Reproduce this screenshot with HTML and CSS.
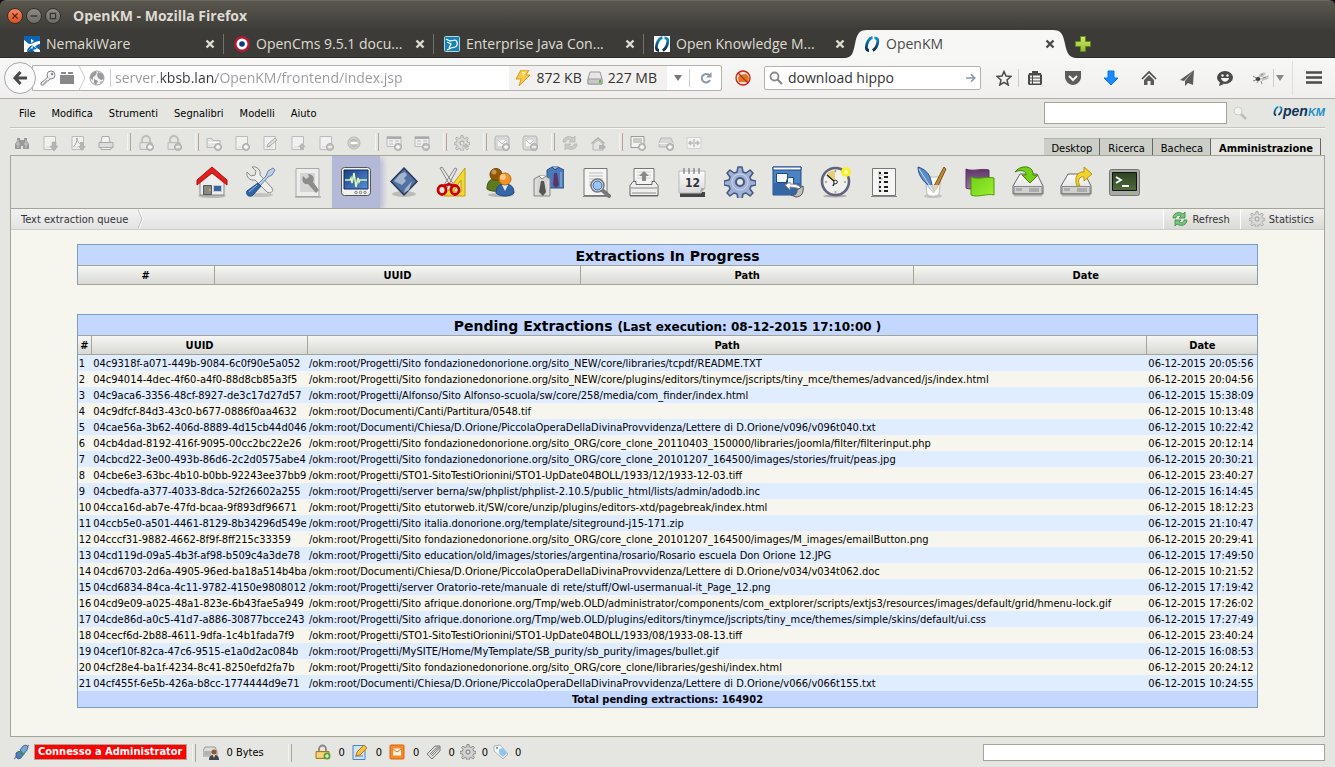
FILE: index.html
```html
<!DOCTYPE html>
<html lang="it">
<head>
    <meta charset="UTF-8">
    <meta name="viewport" content="width=device-width, initial-scale=1.0">
    <title>OpenKM</title>
    <link rel="stylesheet" href="styles.css">
</head>
<body>

<!-- shared shapes -->
<svg class="defs" aria-hidden="true">
    <defs>
        <linearGradient id="g-paper" x1="0" y1="0" x2="0" y2="1"><stop offset="0" stop-color="#fdfdfd"/><stop offset="1" stop-color="#d9d9d9"/></linearGradient>
        <linearGradient id="g-screen" x1="0" y1="0" x2="1" y2="1"><stop offset="0" stop-color="#173f86"/><stop offset="1" stop-color="#5b8fd8"/></linearGradient>
        <linearGradient id="g-green" x1="0" y1="0" x2="1" y2="1"><stop offset="0" stop-color="#6fd01a"/><stop offset="1" stop-color="#9df02e"/></linearGradient>
        <linearGradient id="g-purple" x1="0" y1="0" x2="0" y2="1"><stop offset="0" stop-color="#5c3566"/><stop offset="1" stop-color="#9a76a2"/></linearGradient>
        <linearGradient id="g-term" x1="0" y1="0" x2="0" y2="1"><stop offset="0" stop-color="#2c4420"/><stop offset="1" stop-color="#506b3c"/></linearGradient>
        <linearGradient id="g-mark" x1="0" y1="0" x2="0" y2="1"><stop offset="0" stop-color="#0e8fc9"/><stop offset="1" stop-color="#0b2a4a"/></linearGradient>
        <linearGradient id="g-plus" x1="0" y1="0" x2="0" y2="1"><stop offset="0" stop-color="#d3ea66"/><stop offset="1" stop-color="#94bb2c"/></linearGradient>
    </defs>
    <symbol id="close" viewBox="0 0 10 10"><path d="M1.5 1.5l7 7M8.5 1.500l-7 7" stroke="currentColor" stroke-width="2.400" fill="none"/></symbol>
    <symbol id="okm" viewBox="0 0 16 16">
        <path d="M8.500 1.500C5 2 2.500 7 2.300 11c0 2 .5 3.500 2.700 3.500" fill="none" stroke="url(#g-mark)" stroke-width="2.800"/>
        <path d="M10.500 1.800c2.500 0 3.600 1.500 3.300 4-.5 4-2.300 7-5 8.700" fill="none" stroke="url(#g-mark)" stroke-width="2.800"/>
    </symbol>
    <symbol id="doc" viewBox="0 0 16 16"><path d="M2 1.500h11.500v13H2z" fill="#f1f1ef" stroke="#bbb"/><path d="M4 12h7" stroke="#d6d6d6"/></symbol>
    <symbol id="badge" viewBox="0 0 16 16"><circle cx="12" cy="12" r="3.500" fill="#c4c4c2" stroke="#aaa"/></symbol>
    <symbol id="badge-add" viewBox="0 0 16 16"><use href="#badge"/><path d="M10 12h4M12 10v4" stroke="#fff" stroke-width="1.300"/></symbol>
    <symbol id="badge-del" viewBox="0 0 16 16"><use href="#badge"/><path d="M10 12h4" stroke="#fff" stroke-width="1.300"/></symbol>
    <symbol id="lock" viewBox="0 0 16 16"><path d="M4 8V5a4 4 0 0 1 8 0v3" fill="none" stroke="#bbb" stroke-width="1.800"/><path d="M2 7.500h12v7H2z" fill="#dcdcda" stroke="#bdbdbb"/><path d="M3 10h9M3 12h8" stroke="#eee"/></symbol>
    <symbol id="form" viewBox="0 0 16 16"><path d="M1 1.500h14v10H1z" fill="#eeeeec" stroke="#bbb"/><path d="M1 3h14" stroke="#aaa" stroke-width="2"/><path d="M3 6h4M3 9h4M9 6h4M9 9h3" stroke="#bbb"/></symbol>
    <symbol id="mail" viewBox="0 0 16 16"><rect x="1" y="1" width="14" height="14" rx="2" fill="#d8d8d6" stroke="#b5b5b3"/><path d="M4 5h8v6H4z" fill="#f5f5f5"/><path d="M4 5l4 4 4-4" fill="none" stroke="#bbb"/></symbol>
    <symbol id="gear" viewBox="0 0 32 32">
        <path d="M14 1h4l1 5 3 1 4-3 3 3-3 4 1 3 5 1v4l-5 1-1 3 3 4-3 3-4-3-3 1-1 5h-4l-1-5-3-1-4 3-3-3 3-4-1-3-5-1v-4l5-1 1-3-3-4 3-3 4 3 3-1z" stroke="currentColor" stroke-width="1.500" stroke-linejoin="round"/>
        <circle cx="16" cy="16" r="8" fill="none" stroke="#fff" stroke-opacity=".5"/>
        <circle cx="16" cy="16" r="4" fill="#e5e6e1" stroke="currentColor" stroke-width="2"/>
    </symbol>
    <symbol id="cycle" viewBox="0 0 16 16">
        <path d="M1 7C1 2 7 0 11 3l2-2v6H7l2-2C7 3.500 4 4.500 4 7z" stroke="currentColor" stroke-width=".8"/>
        <path d="M15 9c0 5-6 7-10 4l-2 2V9h6l-2 2c2 1.500 5 .5 5-2z" stroke="currentColor" stroke-width=".8"/>
    </symbol>
    <symbol id="drive" viewBox="0 0 32 32">
        <path d="M8 8h17l6 12v8H1v-8z" fill="url(#g-paper)" stroke="#666"/>
        <path d="M2 20.500h28v7H2z" fill="#d0d0d0" stroke="#888"/>
        <path d="M5 22v3M7 22v3M9 22v3M18 22v4M20 22v4M22 22v4M24 22v4M26 22v4" stroke="#888"/>
        <path d="M2 29.500h28" stroke="#000" stroke-opacity=".2" stroke-width="2"/>
    </symbol>
</svg>

<div class="window">
    <header class="titlebar">
        <div class="title-row">
            <button class="win-button win-close" aria-label="Chiudi"><svg viewBox="0 0 16 16"><path d="M5 5l6 6M11 5l-6 6" stroke="#4a2014" stroke-width="1.500"/></svg></button>
            <button class="win-button" aria-label="Riduci"><svg viewBox="0 0 16 16"><path d="M4 8h8" stroke="#33322e" stroke-width="1.500"/></svg></button>
            <button class="win-button" aria-label="Ingrandisci"><svg viewBox="0 0 16 16"><path d="M5 5h6v6H5z" fill="none" stroke="#33322e" stroke-width="1.300"/></svg></button>
            <span class="window-title">OpenKM - Mozilla Firefox</span>
        </div>
        <nav class="tab-row">
            <div class="tab">
                <svg class="icon16" viewBox="0 0 16 16"><path d="M0 0h16v16H0z" fill="#0a66b5"/><path d="M0 4c3 2 4 4 6 4 3 0 5-3 10-3v3c-3 0-4 2-5 3l5 3v2h-5l-4-4-4 4H0z" fill="#fff"/><path d="M3 16c0-4 3-6 6-7l-4 5zM9 10l4 3-5 1z" fill="#0a66b5"/><path d="M7 3l3 2-3 2z" fill="#fff"/></svg>
                <a class="tab-label" href="#">NemakiWare</a>
                <button class="tab-close" aria-label="Chiudi scheda"><svg><use href="#close"/></svg></button>
            </div>
            <div class="tab">
                <svg class="icon16" viewBox="0 0 16 16"><circle cx="8" cy="8" r="8" fill="#b31b34"/><circle cx="8" cy="8" r="5.500" fill="#fff"/><circle cx="8" cy="8" r="2.800" fill="#0b3a82"/></svg>
                <a class="tab-label" href="#">OpenCms 9.5.1 docu...</a>
                <button class="tab-close" aria-label="Chiudi scheda"><svg><use href="#close"/></svg></button>
            </div>
            <div class="tab">
                <svg class="icon16" viewBox="0 0 16 16"><rect x=".5" y=".5" width="15" height="15" rx="1" fill="#1583b3" stroke="#b9d4dd"/><path d="M2 3l4 2 5-1c3 1 3 6 0 7l-4 1-4 2M3 6l4 2-2 4" fill="none" stroke="#fff" stroke-width="1.200"/></svg>
                <a class="tab-label" href="#">Enterprise Java Con...</a>
                <button class="tab-close" aria-label="Chiudi scheda"><svg><use href="#close"/></svg></button>
            </div>
            <div class="tab tab-before">
                <svg class="icon16 on-white"><use href="#okm"/></svg>
                <a class="tab-label" href="#">Open Knowledge M...</a>
                <button class="tab-close" aria-label="Chiudi scheda"><svg><use href="#close"/></svg></button>
            </div>
            <div class="tab tab-active">
                <svg class="tab-shape" viewBox="0 0 240 28" preserveAspectRatio="none"><path d="M0 28C8 28 9 23 11 14 13 4 15 0 23 0H209C217 0 219 4 221 14 223 23 225 28 233 28z" fill="#f7f7f6"/></svg>
                <svg class="icon16"><use href="#okm"/></svg>
                <a class="tab-label" href="#">OpenKM</a>
                <button class="tab-close" aria-label="Chiudi scheda"><svg><use href="#close"/></svg></button>
            </div>
            <button class="new-tab" aria-label="Nuova scheda"><svg class="icon16" viewBox="0 0 16 16"><path d="M5.500.5h5v5h5v5h-5v5h-5v-5h-5v-5h5z" fill="url(#g-plus)" stroke="#5f8a1c"/></svg></button>
        </nav>
    </header>

    <div class="navbar">
        <button class="back" aria-label="Indietro"><svg viewBox="0 0 16 16"><path d="M8.500 2L3 8l5.500 6M3 8h12" fill="none" stroke="#4a4a48" stroke-width="3"/></svg></button>
        <div class="url-box">
            <svg class="icon16" viewBox="0 0 16 16"><circle cx="11" cy="5" r="4" fill="#f4f4f4" stroke="#888"/><circle cx="12" cy="4" r="1.200" fill="#888"/><path d="M8 7l-7 6v2h3v-2h2v-2h2l2-2" fill="#eee" stroke="#888"/></svg>
            <svg class="icon16" viewBox="0 0 16 16"><path d="M1 5h14v9H1z" fill="#888"/><path d="M2 2h5v2H2zM9 2h5v2H9z" fill="#888"/></svg>
            <svg class="url-chevron" viewBox="0 0 8 24"><path d="M1 0l6 12-6 12" fill="none" stroke="#c8c8c6"/></svg>
            <svg class="icon16" viewBox="0 0 16 16"><circle cx="8" cy="8" r="7" fill="#f2f2f2" stroke="#a0a0a0"/><path d="M2 4l4-3 2 2-2 3-2 1v3L1 8zM9 2l5 2 1 5-3 1-3-2-1-3zM5 9l4 2-2 4-2-2zM11 12l2-1-1 3z" fill="#9a9a9a"/></svg>
            <span class="url-line"></span>
            <input class="url-input" type="text" aria-label="Indirizzo" value="server.kbsb.lan/OpenKM/frontend/index.jsp">
            <div class="cache-info">
                <svg class="icon16" viewBox="0 0 16 16"><path d="M6 0h8l-3 5h4L4 16l2-7H1z" fill="#f7c94a" stroke="#d89c20"/><path d="M7 2h4L8 6" fill="#fff2a8"/></svg>
                <span>872 KB</span>
                <svg class="icon16" viewBox="0 0 16 16"><path d="M3 2h10l2 7v5H1V9z" fill="#e6e6e6" stroke="#999"/><path d="M1 9h14v5H1z" fill="#c9c9c9" stroke="#999"/><path d="M12 10h2v3h-2z" fill="#54c432"/></svg>
                <span>227 MB</span>
            </div>
            <button class="url-button" aria-label="Cronologia"><svg viewBox="0 0 8 8"><path d="M0 1h8L4 7z" fill="#777"/></svg></button>
            <button class="url-button reload" aria-label="Ricarica"><svg viewBox="0 0 12 12"><path d="M10 8a4.300 4.300 0 1 1-1-5" fill="none" stroke="#8a99a8" stroke-width="2"/><path d="M11.500 0v5.500H6z" fill="#8a99a8"/></svg></button>
        </div>
        <button class="nav-button" aria-label="NoScript"><svg class="icon16" viewBox="0 0 16 16"><circle cx="8" cy="8" r="7" fill="#f5d9cf"/><path d="M3 8l2-3 6-1 3 3-1 5H4z" fill="#d97a1e"/><circle cx="8" cy="8" r="7" fill="none" stroke="#cc1f16" stroke-width="1.300"/><path d="M3 3l10 10" stroke="#cc1f16" stroke-width="1.300"/></svg></button>
        <div class="search-box">
            <svg class="search-lens" viewBox="0 0 14 14"><circle cx="5.500" cy="5.500" r="4" fill="none" stroke="#888" stroke-width="1.800"/><path d="M8.500 8.500L13 13" stroke="#888" stroke-width="2.200"/></svg>
            <input class="search-input" type="text" aria-label="Cerca" value="download hippo">
            <button class="search-go" aria-label="Vai"><svg viewBox="0 0 12 12"><path d="M0 6h10M6 1.500L10.500 6 6 10.500" fill="none" stroke="#8a99a8" stroke-width="2"/></svg></button>
        </div>
        <div class="nav-icons">
            <button class="star" aria-label="Segnalibro"><svg class="icon16" viewBox="0 0 16 16"><path d="M8 1.500l2 4.500 5 .5-4 3.500 1.200 5L8 12.300 3.800 15 5 10 1 6.500 6 6z" fill="none" stroke="#4a4a48" stroke-width="1.500"/></svg></button>
            <button class="list" aria-label="Elenco segnalibri"><svg class="icon16" viewBox="0 0 16 16"><path d="M5 1h6v2h3v1l1 1v9l-1 1H2l-1-1V5l1-1V3h3z" fill="#4a4a48"/><path d="M3 6.500h2M3 9.500h2M3 12.500h2M6 6.500h7M6 9.500h7M6 12.500h7" stroke="#f4f4f2" stroke-width="1.800"/></svg></button>
            <button aria-label="Pocket"><svg class="icon16" viewBox="0 0 16 16"><path d="M0 1h16v6c0 4-4 8-8 8S0 11 0 7z" fill="#5c5c5a"/><path d="M4 6l4 4 4-4" fill="none" stroke="#f4f4f2" stroke-width="2"/></svg></button>
            <button aria-label="Scaricamenti"><svg class="icon16" viewBox="0 0 16 16"><path d="M5 1h6v7h4l-7 7-7-7h4z" fill="#1a8cff" stroke="#0b74de"/></svg></button>
            <button aria-label="Pagina iniziale"><svg class="icon16" viewBox="0 0 16 16"><path d="M1 9l7-7 7 7" fill="none" stroke="#4a4a48" stroke-width="1.600"/><path d="M3 10l5-5 5 5v5H9.500v-4h-3v4H3z" fill="#5c5c5a"/></svg></button>
            <button aria-label="Condividi"><svg class="icon16" viewBox="0 0 16 16"><path d="M15 0L1 10l4 1zM15 0L6 11v5l3-3 5 2z" fill="#5c5c5a"/></svg></button>
            <button aria-label="Hello"><svg class="icon16" viewBox="0 0 16 16"><ellipse cx="8" cy="7.500" rx="8" ry="6.500" fill="#4a4a48"/><path d="M3 12l-1 4 5-2z" fill="#4a4a48"/><path d="M4 8h8c-1 5-7 5-8 0z" fill="#f4f4f2"/><circle cx="5.500" cy="5.500" r="1.200" fill="#f4f4f2"/><circle cx="10.500" cy="5.500" r="1.200" fill="#f4f4f2"/></svg></button>
            <button class="fly" aria-label="Firebug"><svg class="icon16" viewBox="0 0 16 16"><path d="M5 7c2-5 6-5 8-4l-3 4zM8 8l8-3-1 4-6 2z" fill="#c4c4c2"/><ellipse cx="5" cy="9" rx="2.500" ry="2" fill="#444"/><path d="M0 6l3 2M0 11l3-1M4 13l1-2M9 14l-1-3M8 5l2-1M10 8l3-1" stroke="#888"/></svg></button>
            <button class="fly-arrow" aria-label="Opzioni Firebug"><svg viewBox="0 0 8 8"><path d="M0 1h8L4 7z" fill="#888"/></svg></button>
            <button class="burger" aria-label="Menu"><svg class="icon16" viewBox="0 0 16 16"><path d="M0 2.500h16M0 7.500h16M0 12.500h16" stroke="#4a4a48" stroke-width="2.500"/></svg></button>
        </div>
    </div>
</div>

<div class="app">
    <div class="menu-bar">
        <nav class="menu">
            <button>File</button>
            <button>Modifica</button>
            <button>Strumenti</button>
            <button>Segnalibri</button>
            <button>Modelli</button>
            <button>Aiuto</button>
        </nav>
        <input class="quick-search" type="text" aria-label="Ricerca veloce">
        <button class="quick-go" aria-label="Cerca"><svg viewBox="0 0 14 14"><circle cx="5" cy="5" r="4" fill="#f2f2f0" stroke="#ccc"/><path d="M8 8l5 5" stroke="#bdbdbb" stroke-width="2.500"/></svg></button>
        <a class="logo" href="#"><svg viewBox="0 0 16 16"><use href="#okm"/></svg><span>pen<b>KM</b></span></a>
    </div>

    <div class="tool-row">
        <div class="tools">
            <button aria-label="Trova"><svg viewBox="0 0 16 16"><path d="M3 3h3v2h4V3h3v3l2 3v5H9v-3H7v3H1V9l2-3z" fill="#999"/><path d="M2 9h4M10 9h4M4 5v8M12 5v8" stroke="#ccc"/></svg></button>
            <button aria-label="Scarica"><svg viewBox="0 0 16 16"><use href="#doc"/><path d="M10 7h4v4h2l-4 5-4-5h2z" fill="#b4b4b2" stroke="#a5a5a3" stroke-width=".5"/></svg></button>
            <button aria-label="Scarica PDF"><svg viewBox="0 0 16 16"><use href="#doc"/><path d="M3 12c3-2 4-6 4-9 0 3 2 6 5 7" fill="none" stroke="#aaa"/><path d="M10 7h4v4h2l-4 5-4-5h2z" fill="#b4b4b2"/></svg></button>
            <button aria-label="Stampa"><svg viewBox="0 0 16 16"><path d="M4 1.500h7l1 6H3z" fill="#f3f3f1" stroke="#aaa"/><path d="M1 7.500h14v5H1z" fill="#ddd" stroke="#a8a8a6"/><path d="M3 12.500h10v2H3z" fill="#f3f3f1" stroke="#aaa"/></svg></button>
            <i class="sep"></i>
            <button aria-label="Blocca"><svg><use href="#lock"/><use href="#badge-add"/></svg></button>
            <button aria-label="Sblocca"><svg><use href="#lock"/><use href="#badge-del"/></svg></button>
            <i class="sep"></i>
            <button aria-label="Nuova cartella"><svg viewBox="0 0 16 16"><path d="M1 3.500h5l1 2h7v7H1z" fill="#e4e4e2" stroke="#b9b9b7"/><path d="M2 7.500h11" stroke="#fff"/><use href="#badge-add"/></svg></button>
            <button aria-label="Nuovo documento"><svg><use href="#doc"/><use href="#badge-add"/></svg></button>
            <button aria-label="Modifica documento"><svg viewBox="0 0 16 16"><use href="#doc"/><path d="M5 12l1-3 7-6 2 2-7 6z" fill="#ddd" stroke="#aaa"/></svg></button>
            <button aria-label="Check-in"><svg viewBox="0 0 16 16"><use href="#doc"/><path d="M12 8l4 4h-2v3h-4v-3H8z" fill="#b8b8b6"/></svg></button>
            <button aria-label="Annulla modifica"><svg><use href="#doc"/><use href="#badge-del"/></svg></button>
            <button aria-label="Elimina"><svg viewBox="0 0 16 16"><circle cx="8" cy="8" r="6" fill="#bcbcba" stroke="#b5b5b3"/><circle cx="8" cy="8" r="5" fill="none" stroke="#d8d8d6"/><path d="M4.500 8h7" stroke="#fff" stroke-width="2.500"/></svg></button>
            <i class="sep"></i>
            <button aria-label="Aggiungi gruppo"><svg><use href="#form"/><use href="#badge-add"/></svg></button>
            <button aria-label="Rimuovi gruppo"><svg><use href="#form"/><use href="#badge-del"/></svg></button>
            <i class="sep"></i>
            <button aria-label="Avvia workflow"><svg class="gray-gear" viewBox="0 0 16 16"><use href="#gear"/><path d="M8 9h3V7l5 4-5 4v-2H8z" fill="#bcbcba" stroke="#eee" stroke-width=".6"/></svg></button>
            <i class="sep"></i>
            <button aria-label="Aggiungi sottoscrizione"><svg><use href="#mail"/><use href="#badge-add"/></svg></button>
            <button aria-label="Rimuovi sottoscrizione"><svg><use href="#mail"/><use href="#badge-del"/></svg></button>
            <i class="sep"></i>
            <button aria-label="Aggiorna"><svg class="gray-cycle"><use href="#cycle"/></svg></button>
            <button aria-label="Home"><svg viewBox="0 0 16 16"><path d="M1 8l7-6 7 6-1 1-6-5-6 5z" fill="#b0b0ae"/><path d="M3 9l5-4 5 4v6H3z" fill="#e3e3e1" stroke="#b5b5b3"/><path d="M9 10h3V8l4 4-4 4v-2H9z" fill="#b5b5b3"/></svg></button>
            <i class="sep"></i>
            <button aria-label="Scansione"><svg viewBox="0 0 16 16"><path d="M1 1.500h13v11H1z" fill="#f2f2f0" stroke="#999"/><path d="M3 3h9v5H3z" fill="#c9c9c7"/><use href="#badge-add"/></svg></button>
            <button aria-label="Carica"><svg viewBox="0 0 16 16"><path d="M3 3h10l2 5v4H1V8z" fill="#d8d8d6" stroke="#b8b8b6"/><path d="M1 8.500h14" stroke="#f3f3f1"/><use href="#badge-add"/></svg></button>
            <button aria-label="Dividi"><svg viewBox="0 0 16 16"><path d="M1 2.500h14v11H1z" fill="#f3f3f1" stroke="#d0d0ce"/><path d="M7 8H3M9 8h4M5 6L3 8l2 2M11 6l2 2-2 2M8 4v8" fill="none" stroke="#b5b5b3" stroke-width="1.300"/></svg></button>
        </div>
        <nav class="views">
            <button>Desktop</button>
            <button>Ricerca</button>
            <button>Bacheca</button>
            <button class="current">Amministrazione</button>
        </nav>
    </div>

    <main class="panel">
        <nav class="admin-icons">
            <button aria-label="Home"><svg viewBox="0 0 32 32"><ellipse cx="16" cy="30" rx="14" ry="2" fill="#000" fill-opacity=".2"/><path d="M4 15L16 5l12 10v14H4z" fill="#eeeeec" stroke="#888"/><path d="M7.500 19.500h8v9h-8z" fill="#888a85" stroke="#555"/><path d="M17.500 19.500h8v6h-8z" fill="#3465a4" stroke="#ccc"/><circle cx="14" cy="24" r=".8" fill="#fce94f"/><path d="M16 1L1 14v5L16 7l15 12v-5z" fill="#e22020" stroke="#b50b0b" stroke-linejoin="round"/></svg></button>
            <button aria-label="Configurazione"><svg viewBox="0 0 32 32"><ellipse cx="16" cy="29" rx="13" ry="2" fill="#000" fill-opacity=".15"/><path d="M3 6l4 4 4-1 1-4-4-4c5-1 9 3 8 8l12 13c2 4-2 6-5 4L11 14C6 15 2 11 3 6z" fill="#eeeeec" stroke="#888a85"/><path d="M24 5l5-3 2 2-3 5-4 2-8 9-2-2 8-8z" fill="#b9cde4" stroke="#6a86a8"/><path d="M14 17l3 3-8 9c-3 3-8 0-6-4z" fill="#3465a4" stroke="#204a87"/><path d="M5 26l8-7" stroke="#9cc0ea"/></svg></button>
            <button aria-label="Tipi MIME"><svg viewBox="0 0 32 32"><path d="M4 2.500h23v28H4z" fill="#ededeb" stroke="#aaa"/><path d="M8 7h15v19H8z" fill="#d5d5d3"/><path d="M11 10l3 3 3-2-1-3c5 0 7 4 5 8l6 8-3 3-8-9c-4 1-7-3-5-8z" fill="#8c8c8a"/><path d="M3 31h26" stroke="#999"/></svg></button>
            <button class="selected" aria-label="Statistiche"><svg viewBox="0 0 32 32"><rect x="1.500" y="1.500" width="29" height="28" rx="3" fill="#f2f2ef" stroke="#555"/><path d="M4 4h24v19H4z" fill="url(#g-screen)" stroke="#112c5c"/><path d="M5 14h5l1-2 1 5 2-10 2 14 2-9 1 4 1-2h7" fill="none" stroke="#d9f7b0" stroke-width="1.600"/><circle cx="16" cy="26.500" r="1.300" fill="#ddd" stroke="#888"/><circle cx="20.500" cy="26.500" r="1.300" fill="#ddd" stroke="#888"/><circle cx="25" cy="26.500" r="1.300" fill="#ddd" stroke="#888"/></svg></button>
            <button aria-label="Navigatore"><svg viewBox="0 0 32 32"><ellipse cx="16" cy="28" rx="12" ry="3" fill="#000" fill-opacity=".18"/><path d="M16 2l13 13.500L16 29 3 15.500z" fill="#52719e" stroke="#26395a" stroke-width="1.500"/><path d="M12 8l5-2 2 3-3 3 2 3-4 4-4-2-4-2zM17 23l7-8-3 9-5 3z" fill="#b7c6da" fill-opacity=".8"/></svg></button>
            <button aria-label="Utilità"><svg viewBox="0 0 32 32"><path d="M29 2v28H8z" fill="#f4d733" stroke="#c4a000"/><path d="M25 14v12h-8z" fill="#e5e6e1" stroke="#c4a000"/><path d="M4 2l11 19 3-2L6 1zM19 2L8 19l3 3L21 3z" fill="#e6e6e4" stroke="#888"/><ellipse cx="6" cy="24" rx="4" ry="4.500" fill="none" stroke="#cc0000" stroke-width="2.800"/><ellipse cx="19" cy="24" rx="4" ry="4.500" fill="none" stroke="#cc0000" stroke-width="2.800"/><path d="M8 20l5-2 5 2" fill="none" stroke="#cc0000" stroke-width="2.500"/></svg></button>
            <button aria-label="Utenti"><svg viewBox="0 0 32 32"><ellipse cx="17" cy="29" rx="13" ry="2" fill="#000" fill-opacity=".2"/><path d="M3 23c0-6 2-10 8-10s9 4 9 10c-4 3-13 3-17 0z" fill="#5e7a20" stroke="#3c5210"/><circle cx="12" cy="8.500" r="6" fill="#8f5902" stroke="#6b4201"/><circle cx="10" cy="6" r="2.500" fill="#c89352"/><path d="M12 27c0-6 3-9 9-9s9 3 9 9c-4 4-14 4-18 0z" fill="#3465a4" stroke="#204a87"/><path d="M18 19l3 6 3-6z" fill="#dce8f5"/><circle cx="21" cy="13" r="6" fill="#f0932b" stroke="#c46a0a"/><circle cx="19" cy="11" r="3" fill="#ffc684"/></svg></button>
            <button aria-label="Profili"><svg viewBox="0 0 32 32"><path d="M15 4l5-3h6l6 3v18H15z" fill="#4a7ab8" stroke="#2b5388"/><path d="M20 1l3 3 4-3" fill="#8bb0df" stroke="#204a87"/><path d="M22 7h3l2 12-3 3-3-3z" fill="#5c3566"/><path d="M2 13l5-3h6l5 3v17H2z" fill="#d5d5d3" stroke="#888"/><path d="M7 10l3 3 4-3" fill="#fff" stroke="#888"/><path d="M9 15h3l2 11-3 4-4-4z" fill="#555753"/><path d="M4 15v14M16 15v14M29 6v15" stroke="#fff" stroke-opacity=".5"/></svg></button>
            <button aria-label="Log attività"><svg viewBox="0 0 32 32"><path d="M4 2.500h23v27H4z" fill="#f5f5f3" stroke="#777"/><path d="M9 7h14M9 10h14M9 13h14M9 16h8M9 19h5" stroke="#bbb"/><path d="M3 30.500h26" stroke="#888"/><path d="M22 24l7 6" stroke="#777" stroke-width="4" stroke-linecap="round"/><circle cx="17.500" cy="19.500" r="6.500" fill="#e4eefa" stroke="#777" stroke-width="1.500"/><circle cx="17.500" cy="19.500" r="4.500" fill="#9fc2ee" stroke="#3465a4"/></svg></button>
            <button aria-label="Stampa"><svg viewBox="0 0 32 32"><path d="M6 2.500h20v16H6z" fill="#f6f6f4" stroke="#777"/><path d="M9 6h14M9 9h14M9 12h14" stroke="#ccc"/><path d="M16 5l5 5h-3v5h-4v-5h-3z" fill="#888a85"/><path d="M5 15.500h3v3h16v-3h3l3 4v10H2v-10z" fill="#efefed" stroke="#666"/><path d="M3 22h26M4 27h24" stroke="#888"/><path d="M2 30.500h28" stroke="#aaa"/></svg></button>
            <button aria-label="Calendario"><svg viewBox="0 0 32 32"><path d="M4 26h25v5H4z" fill="#444"/><path d="M3 5h26v17l-4 5H3z" fill="url(#g-paper)" stroke="#bbb"/><path d="M8 2v6M13 2v6M18 2v6M23 2v6" stroke="#666"/><path d="M24 27l1-5h4z" fill="#aaa"/><text x="9" y="21" class="cal-day">12</text></svg></button>
            <button aria-label="Impostazioni"><svg class="blue-gear"><use href="#gear"/></svg></button>
            <button aria-label="Report"><svg viewBox="0 0 32 32"><path d="M1 1h28v28H1z" fill="#4a82c4" stroke="#204a87"/><path d="M1 1h28v3H1z" fill="#fff" stroke="#204a87"/><path d="M2 17h26v11H2z" fill="#3465a4"/><path d="M4.500 7.500h11v9h-11zM16.500 11.500h5v8h-7v-5z" fill="#f4f7fb" stroke="#204a87"/><path d="M13 19l5-3v2c6 0 9 1 12 5-1 0-4 0-5-1l-7-1v3z" fill="#fff" stroke="#888"/><path d="M19 29c5 1 6-2 6-5l6-4c1 6-1 11-7 11z" fill="#bfbfbd" stroke="#555"/></svg></button>
            <button aria-label="Attività pianificate"><svg viewBox="0 0 32 32"><ellipse cx="15" cy="30" rx="12" ry="1.500" fill="#000" fill-opacity=".25"/><circle cx="15.500" cy="15.500" r="13.500" fill="#f0f0ee" stroke="#62627e" stroke-width="2.600"/><path d="M15 16L7 9c1-3 5-5 8-4z" fill="#e8cf74"/><path d="M15 16L7 9M15 16l-2 4" stroke="#222" stroke-width="1.500"/><circle cx="15.500" cy="16" r="1.800" fill="#fff" stroke="#222"/><circle cx="15.500" cy="5" r="1" fill="#999"/><circle cx="25" cy="16" r="1" fill="#999"/><circle cx="15.500" cy="26" r="1" fill="#999"/><circle cx="6" cy="16" r="1" fill="#999"/><circle cx="26" cy="6" r="5" fill="#f8ee2c"/><circle cx="26" cy="6" r="2" fill="#fffcae"/></svg></button>
            <button aria-label="Thesaurus"><svg viewBox="0 0 32 32"><path d="M4.500 2.500h23v27h-23z" fill="#f6f6f4" stroke="#777"/><path d="M3 30.500h26" stroke="#888"/><path d="M11 5v4h4M11 9v4h4M11 17v8h4" fill="none" stroke="#bbb"/><path d="M11 7h2M16 7h4M11 12h2M16 11h4M11 16h2M16 16h4M11 21h2M16 21h4M11 25h2M16 25h4" stroke="#222" stroke-width="2"/></svg></button>
            <button aria-label="Stili"><svg viewBox="0 0 32 32"><ellipse cx="17" cy="30" rx="9" ry="2" fill="#000" fill-opacity=".15"/><path d="M9 11h16l-2 17c-2 3-10 3-12 0z" fill="#fafafa" stroke="#bbb"/><path d="M2 1c7 2 12 7 13 14l3 11c-4-2-6-5-7-8C6 14 2 8 2 1z" fill="#5b8cca" stroke="#2b5388"/><path d="M3 3l14 22" stroke="#c6dbf2"/><path d="M28 1l2 2-9 19-4 5 1-7z" fill="#c08a34" stroke="#7a5212"/><path d="M11 19h12l-1 9H12z" fill="#fff" fill-opacity=".65"/></svg></button>
            <button aria-label="Lingua"><svg viewBox="0 0 32 32"><path d="M2 3c6 3 16-1 23 1v18c-7-2-17 3-23 0z" fill="url(#g-purple)" stroke="#5c3566"/><path d="M7 11c6 3 17-1 23 1v17c-6-2-17 3-23 0z" fill="url(#g-green)" stroke="#4e9a06"/></svg></button>
            <button aria-label="Importa"><svg><use href="#drive"/><path d="M3 6C8-1 20-1 21 7v2h5l-8 8-8-8h4c1-4-6-6-11-3z" fill="#73d216" stroke="#3e8205"/></svg></button>
            <button aria-label="Esporta"><svg><use href="#drive"/><path d="M17 20c-3-8 0-15 7-14V1l8 7-8 7v-4c-5-1-7 4-4 9z" fill="#f0d330" stroke="#b89500"/></svg></button>
            <button aria-label="Scripting"><svg viewBox="0 0 32 32"><rect x="1.500" y="3.500" width="30" height="26" rx="2" fill="#a8aaa5" stroke="#777"/><path d="M4.500 6.500h24v18h-24z" fill="url(#g-term)" stroke="#111"/><path d="M8 11l5 3-5 3M14 20h7" fill="none" stroke="#fff" stroke-width="1.800"/><path d="M22 27h2" stroke="#7ad42a" stroke-width="1.500"/></svg></button>
        </nav>

        <div class="crumb-bar">
            <span class="crumb">Text extraction queue</span>
            <svg class="crumb-end" viewBox="0 0 6 20"><path d="M0 0l4 10-4 10" fill="none" stroke="#b8b8b6"/><path d="M1 0l4 10-4 10" fill="none" stroke="#fff"/></svg>
            <span class="spacer"></span>
            <button><svg class="green-cycle"><use href="#cycle"/></svg>Refresh</button>
            <button><svg class="gray-gear"><use href="#gear"/></svg>Statistics</button>
        </div>

        <table class="results progress-table">
            <thead>
                <tr class="caption"><th colspan="4">Extractions In Progress</th></tr>
                <tr class="heads"><th class="p-num">#</th><th class="p-uuid">UUID</th><th class="p-path">Path</th><th class="p-date">Date</th></tr>
            </thead>
        </table>

        <table class="results">
            <thead>
                <tr class="caption"><th colspan="4">Pending Extractions <span>(Last execution: 08-12-2015 17:10:00 )</span></th></tr>
                <tr class="heads"><th class="num">#</th><th class="uuid">UUID</th><th>Path</th><th class="date">Date</th></tr>
            </thead>
            <tbody>
                <tr><td>1</td><td>04c9318f-a071-449b-9084-6c0f90e5a052</td><td>/okm:root/Progetti/Sito fondazionedonorione.org/sito_NEW/core/libraries/tcpdf/README.TXT</td><td>06-12-2015 20:05:56</td></tr>
                <tr><td>2</td><td>04c94014-4dec-4f60-a4f0-88d8cb85a3f5</td><td>/okm:root/Progetti/Sito fondazionedonorione.org/sito_NEW/core/plugins/editors/tinymce/jscripts/tiny_mce/themes/advanced/js/index.html</td><td>06-12-2015 20:04:56</td></tr>
                <tr><td>3</td><td>04c9aca6-3356-48cf-8927-de3c17d27d57</td><td>/okm:root/Progetti/Alfonso/Sito Alfonso-scuola/sw/core/258/media/com_finder/index.html</td><td>06-12-2015 15:38:09</td></tr>
                <tr><td>4</td><td>04c9dfcf-84d3-43c0-b677-0886f0aa4632</td><td>/okm:root/Documenti/Canti/Partitura/0548.tif</td><td>06-12-2015 10:13:48</td></tr>
                <tr><td>5</td><td>04cae56a-3b62-406d-8889-4d15cb44d046</td><td>/okm:root/Documenti/Chiesa/D.Orione/PiccolaOperaDellaDivinaProvvidenza/Lettere di D.Orione/v096/v096t040.txt</td><td>06-12-2015 10:22:42</td></tr>
                <tr><td>6</td><td>04cb4dad-8192-416f-9095-00cc2bc22e26</td><td>/okm:root/Progetti/Sito fondazionedonorione.org/sito_ORG/core_clone_20110403_150000/libraries/joomla/filter/filterinput.php</td><td>06-12-2015 20:12:14</td></tr>
                <tr><td>7</td><td>04cbcd22-3e00-493b-86d6-2c2d0575abe4</td><td>/okm:root/Progetti/Sito fondazionedonorione.org/sito_ORG/core_clone_20101207_164500/images/stories/fruit/peas.jpg</td><td>06-12-2015 20:30:21</td></tr>
                <tr><td>8</td><td>04cbe6e3-63bc-4b10-b0bb-92243ee37bb9</td><td>/okm:root/Progetti/STO1-SitoTestiOrionini/STO1-UpDate04BOLL/1933/12/1933-12-03.tiff</td><td>06-12-2015 23:40:27</td></tr>
                <tr><td>9</td><td>04cbedfa-a377-4033-8dca-52f26602a255</td><td>/okm:root/Progetti/server berna/sw/phplist/phplist-2.10.5/public_html/lists/admin/adodb.inc</td><td>06-12-2015 16:14:45</td></tr>
                <tr><td>10</td><td>04cca16d-ab7e-47fd-bcaa-9f893df96671</td><td>/okm:root/Progetti/Sito etutorweb.it/SW/core/unzip/plugins/editors-xtd/pagebreak/index.html</td><td>06-12-2015 18:12:23</td></tr>
                <tr><td>11</td><td>04ccb5e0-a501-4461-8129-8b34296d549e</td><td>/okm:root/Progetti/Sito italia.donorione.org/template/siteground-j15-171.zip</td><td>06-12-2015 21:10:47</td></tr>
                <tr><td>12</td><td>04cccf31-9882-4662-8f9f-8ff215c33359</td><td>/okm:root/Progetti/Sito fondazionedonorione.org/sito_ORG/core_clone_20101207_164500/images/M_images/emailButton.png</td><td>06-12-2015 20:29:41</td></tr>
                <tr><td>13</td><td>04cd119d-09a5-4b3f-af98-b509c4a3de78</td><td>/okm:root/Progetti/Sito education/old/images/stories/argentina/rosario/Rosario escuela Don Orione 12.JPG</td><td>06-12-2015 17:49:50</td></tr>
                <tr><td>14</td><td>04cd6703-2d6a-4905-96ed-ba18a514b4ba</td><td>/okm:root/Documenti/Chiesa/D.Orione/PiccolaOperaDellaDivinaProvvidenza/Lettere di D.Orione/v034/v034t062.doc</td><td>06-12-2015 10:21:52</td></tr>
                <tr><td>15</td><td>04cd6834-84ca-4c11-9782-4150e9808012</td><td>/okm:root/Progetti/server Oratorio-rete/manuale di rete/stuff/Owl-usermanual-it_Page_12.png</td><td>06-12-2015 17:19:42</td></tr>
                <tr><td>16</td><td>04cd9e09-a025-48a1-823e-6b43fae5a949</td><td>/okm:root/Progetti/Sito afrique.donorione.org/Tmp/web.OLD/administrator/components/com_extplorer/scripts/extjs3/resources/images/default/grid/hmenu-lock.gif</td><td>06-12-2015 17:26:02</td></tr>
                <tr><td>17</td><td>04cde86d-a0c5-41d7-a886-30877bcce243</td><td>/okm:root/Progetti/Sito afrique.donorione.org/Tmp/web.OLD/plugins/editors/tinymce/jscripts/tiny_mce/themes/simple/skins/default/ui.css</td><td>06-12-2015 17:27:49</td></tr>
                <tr><td>18</td><td>04cecf6d-2b88-4611-9dfa-1c4b1fada7f9</td><td>/okm:root/Progetti/STO1-SitoTestiOrionini/STO1-UpDate04BOLL/1933/08/1933-08-13.tiff</td><td>06-12-2015 23:40:24</td></tr>
                <tr><td>19</td><td>04cef10f-82ca-47c6-9515-e1a0d2ac084b</td><td>/okm:root/Progetti/MySITE/Home/MyTemplate/SB_purity/sb_purity/images/bullet.gif</td><td>06-12-2015 16:08:53</td></tr>
                <tr><td>20</td><td>04cf28e4-ba1f-4234-8c41-8250efd2fa7b</td><td>/okm:root/Progetti/Sito fondazionedonorione.org/sito_ORG/core_clone/libraries/geshi/index.html</td><td>06-12-2015 20:24:12</td></tr>
                <tr><td>21</td><td>04cf455f-6e5b-426a-b8cc-1774444d9e71</td><td>/okm:root/Documenti/Chiesa/D.Orione/PiccolaOperaDellaDivinaProvvidenza/Lettere di D.Orione/v066/v066t155.txt</td><td>06-12-2015 10:24:55</td></tr>
            </tbody>
            <tfoot>
                <tr><td colspan="4">Total pending extractions: 164902</td></tr>
            </tfoot>
        </table>
    </main>

    <footer class="status-bar">
        <svg class="icon16" viewBox="0 0 16 16"><path d="M0 15l4-4M12 4l3-3" stroke="#888" stroke-width="1.500"/><path d="M2 9l3-2 4 4-2 3-3 1-2-2z" fill="#4b7fc0" stroke="#2b5388" stroke-width=".8"/><path d="M6 6l3-4 3-1 2 2-1 3-3 4z" fill="#7ba4d8" stroke="#2b5388" stroke-width=".8"/><path d="M6 7l4 4" stroke="#3f9a3a" stroke-width="1.500"/></svg>
        <span class="user">Connesso a Administrator</span>
        <i class="sep"></i>
        <span class="quota"><svg class="icon16" viewBox="0 0 16 16"><path d="M2 3h10l2 4v5H0V7z" fill="#dcdcda" stroke="#999"/><path d="M1 8h9M1 10h7" stroke="#888"/><circle cx="11" cy="8" r="2.500" fill="#8a5a2b"/><path d="M6 16c0-4 2-5 5-5s5 1 5 5z" fill="#444"/><path d="M10 11l1 3 1-3z" fill="#fff"/></svg>0 Bytes</span>
        <i class="sep"></i>
        <div class="counts">
            <span class="wide"><svg class="icon16" viewBox="0 0 16 16"><path d="M4 8V5a3.500 3.500 0 0 1 7 0v3" fill="none" stroke="#888" stroke-width="1.800"/><path d="M1 7.500h13v7H1z" fill="#f0c45c" stroke="#a87b1c"/><path d="M2 10h11M2 12h11" stroke="#fbe3a4"/><circle cx="12" cy="12" r="3.500" fill="#5aa02c"/><path d="M10 12h4M12 10v4" stroke="#fff"/></svg>0</span>
            <span class="wide"><svg class="icon16" viewBox="0 0 16 16"><path d="M1 1.500h12v14H1z" fill="#cfe2f8" stroke="#4a82c4"/><path d="M3 12h8" stroke="#4a82c4"/><path d="M4 12l1-4 7-7 3 3-7 7z" fill="#f5c242" stroke="#b37a12"/></svg>0</span>
            <span class="wide"><svg class="icon16" viewBox="0 0 16 16"><rect x="1" y="1" width="14" height="14" rx="1" fill="#f58a2a" stroke="#d9640a"/><path d="M4 4.500h8v7H4z" fill="#fff3e4"/><path d="M4 5l4 3 4-3" fill="none" stroke="#e0731a"/></svg>0</span>
            <span><svg class="icon16" viewBox="0 0 16 16"><path d="M1 10l8-8h5v5l-8 8z" fill="#ddd" stroke="#777"/><path d="M4 10l6-6M6 12l6-6M5 11l6-6" stroke="#888"/><circle cx="12" cy="4" r="1.200" fill="#fff" stroke="#777"/></svg>0</span>
            <span><svg class="icon16 status-gear"><use href="#gear"/></svg>0</span>
            <span><svg class="icon16" viewBox="0 0 16 16"><path d="M1 2l6-1 8 9-5 5-9-8z" fill="#f7fafd" stroke="#a8b4c0"/><path d="M6 5l4-1 4 5-4 4-4-4z" fill="#8fc4ee"/><circle cx="4" cy="4" r="1" fill="#777"/></svg>0</span>
        </div>
        <span class="spacer"></span>
        <div class="message-box"></div>
    </footer>
</div>

</body>
</html>
```
FILE: styles.css
```css
* {
    box-sizing: border-box;
}

body {
    margin: 0;
    min-height: 100vh;
    display: flex;
    flex-direction: column;
    background-color: #e5e6e1;
    color: #000;
    font-family: "DejaVu Sans Condensed", "DejaVu Sans", Tahoma, sans-serif;
    font-size: 11px;
}

button, input {
    font: inherit;
    color: inherit;
}

button {
    padding: 0;
    border: none;
    background: none;
    display: flex;
    align-items: center;
    justify-content: center;
    cursor: pointer;
}

svg {
    display: block;
    flex: none;
}

.defs {
    position: absolute;
    width: 0;
    height: 0;
}

.icon16 {
    width: 16px;
    height: 16px;
}

.spacer {
    flex: 1;
}

/* ---- browser window ---- */
.window {
    background-color: #1c0a14;
    font-family: "Open Sans", "Noto Sans", sans-serif;
    font-size: 14px;
}

.titlebar {
    border-radius: 6px 6px 0 0;
    border-top: 1px solid #6b685f;
    background: linear-gradient(#5a574e, #3c3b37 30px);
}

.title-row {
    height: 29px;
    display: flex;
    align-items: center;
    gap: 3px;
    padding-left: 7px;
}

.win-button {
    width: 16px;
    height: 16px;
    border-radius: 50%;
    background: linear-gradient(#8c8a82, #6d6b64);
    border: 1px solid #33322e;
}

.win-button svg {
    width: 14px;
    height: 14px;
}

.win-close {
    background: linear-gradient(#f5875e, #df4e1c);
}

.window-title {
    margin-left: 9px;
    color: #dfdbd2;
    font-weight: bold;
}

.tab-row {
    height: 28px;
    display: flex;
    padding-left: 14px;
    border-bottom: 1px solid #2b2a27;
}

.tab {
    position: relative;
    width: 210px;
    padding: 0 9px 0 10px;
    display: flex;
    align-items: center;
    gap: 6px;
    color: #dfdbd2;
}

.tab::after {
    content: "";
    position: absolute;
    right: 0;
    top: 4px;
    width: 1px;
    height: 20px;
    background-color: #72716b;
}

.tab-before::after, .tab-active::after {
    display: none;
}

.tab-label {
    flex: 1;
    color: inherit;
    text-decoration: none;
    white-space: nowrap;
}

.tab-close svg {
    width: 10px;
    height: 10px;
}

.on-white {
    background-color: #fff;
}

.tab-active {
    color: #4a4a48;
}

.tab-active > * {
    z-index: 1;
}

.tab-active .tab-shape {
    position: absolute;
    z-index: 0;
    left: -10px;
    top: 0;
    width: 240px;
    height: 28px;
}

.new-tab {
    margin-left: 11px;
    z-index: 1;
}

.navbar {
    height: 41px;
    display: flex;
    align-items: center;
    padding: 0 13px 1px 4px;
    border-bottom: 1px solid #b3aeaa;
    background: linear-gradient(#f7f7f6, #f0efee);
}

.back {
    width: 32px;
    height: 32px;
    margin-right: -4px;
    z-index: 1;
    border: 1px solid #a3a8ae;
    border-radius: 50%;
    background-color: #fafafa;
}

.back svg {
    width: 16px;
    height: 16px;
}

.url-box {
    flex: 1;
    height: 26px;
    padding-left: 7px;
    display: flex;
    align-items: center;
    gap: 3px;
    border: 1px solid #b5b2ad;
    border-radius: 0 2px 2px 0;
    background-color: #fff;
}

.url-chevron {
    width: 8px;
    height: 24px;
}

.url-line {
    width: 1px;
    height: 18px;
    margin-left: 2px;
    background-color: #ccc;
}

/* the host part of the address is darker than the rest */
.url-input {
    flex: 1;
    min-width: 0;
    padding: 0 0 0 1px;
    border: none;
    outline: none;
    color: transparent;
    background: linear-gradient(90deg, #999 47px, #333 47px, #333 102px, #999 102px);
    background-clip: text;
    -webkit-background-clip: text;
}

.cache-info {
    height: 24px;
    padding: 0 10px 0 6px;
    display: flex;
    align-items: center;
    gap: 5px;
    background-color: #f2f1f0;
    color: #333;
    white-space: nowrap;
}

.url-button {
    width: 16px;
}

.url-button svg {
    width: 8px;
    height: 8px;
}

.reload {
    width: 32px;
    height: 18px;
    border-left: 1px solid #ccc;
}

.reload svg {
    width: 12px;
    height: 12px;
}

.nav-button {
    width: 42px;
}

.search-box {
    width: 217px;
    height: 24px;
    padding: 0 4px;
    display: flex;
    align-items: center;
    gap: 5px;
    border: 1px solid #b5b2ad;
    border-radius: 2px;
    background-color: #fff;
}

.search-lens {
    width: 14px;
    height: 14px;
}

.search-input {
    flex: 1;
    min-width: 0;
    padding: 0;
    border: none;
    outline: none;
    background: none;
    color: #333;
}

.search-go svg {
    width: 10px;
    height: 12px;
}

.nav-icons {
    display: flex;
    align-items: center;
    padding-left: 10px;
}

.nav-icons button {
    width: 38px;
    height: 18px;
}

.nav-icons .star {
    width: 28px;
    padding-right: 2px;
    border-right: 1px solid #ccc;
}

.nav-icons .list {
    width: 35px;
    padding-right: 3px;
}

.nav-icons .fly {
    width: 30px;
    padding-left: 4px;
    border-right: 1px solid #ccc;
}

.nav-icons .fly-arrow {
    width: 12px;
}

.fly-arrow svg {
    width: 8px;
    height: 8px;
}

.nav-icons .burger {
    width: 30px;
    height: 34px;
    justify-content: flex-end;
    margin-left: 6px;
    border-left: 1px solid #ddd;
}

/* ---- application ---- */
.app {
    flex: 1;
    display: flex;
    flex-direction: column;
    padding: 0 10px;
}

.menu-bar {
    height: 29px;
    display: flex;
    align-items: center;
    border-bottom: 1px solid #c5c5bf;
}

.menu {
    flex: 1;
    display: flex;
    gap: 16px;
    padding-left: 9px;
}

.quick-search {
    width: 183px;
    height: 22px;
    border: 1px solid #a5a596;
    background-color: #fff;
}

.quick-go {
    margin: 0 26px 0 6px;
}

.quick-go svg {
    width: 14px;
    height: 14px;
}

.logo {
    display: flex;
    align-items: center;
    padding-bottom: 4px;
    color: #0f3557;
    text-decoration: none;
    font: italic bold 14px "Liberation Sans", Arial, sans-serif;
}

.logo svg {
    width: 10px;
    height: 12px;
}

.logo b {
    color: #1a8fc4;
    font-size: 11px;
}

.tool-row {
    height: 27px;
    display: flex;
    border-top: 1px solid #f7f7f3;
}

.tools {
    flex: 1;
    display: flex;
    padding-top: 2px;
}

.tools button {
    width: 28px;
    padding-right: 4px;
}

.tools svg {
    width: 16px;
    height: 16px;
}

.sep {
    width: 12px;
    display: flex;
}

.sep::before {
    content: "";
    width: 2px;
    height: 18px;
    margin: 2px 0 0 5px;
    border-left: 1px solid #f4f4f0;
    border-right: 1px solid #b5a596;
}

.gray-gear {
    color: #a2a2a0;
    fill: #d4d4d2;
}

.gray-cycle {
    color: #b5b5b3;
    fill: #cacac8;
}

.green-cycle {
    color: #2e8b3e;
    fill: #7cc47a;
}

.views {
    display: flex;
    align-self: flex-end;
    margin-right: 4px;
}

.views button {
    height: 17px;
    padding: 3px 7px 0 8px;
    border-top: 1px solid #b0b0ac;
    border-right: 1px solid #666;
    background-color: #cccec8;
}

.views .current {
    background-color: #e5e6e1;
    font-weight: bold;
}

.panel {
    flex: 1;
    border: 1px solid #a5a596;
    background-color: #f6f6ee;
}

.admin-icons {
    display: flex;
    justify-content: center;
    border-bottom: 1px solid #a5a596;
    background-color: #e5e6e1;
}

.admin-icons button {
    width: 48px;
    height: 52px;
}

.admin-icons svg {
    width: 32px;
    height: 32px;
}

.admin-icons .selected {
    background-color: #b4b9d7;
    box-shadow: 3px 2px 6px #b4b9d7;
    clip-path: inset(0 -8px 0 0);
}

.blue-gear {
    color: #46587e;
    fill: #9fb0d6;
}

.cal-day {
    font: bold 12px "DejaVu Sans Condensed", sans-serif;
    fill: #333;
}

.crumb-bar {
    height: 21px;
    display: flex;
    border-bottom: 1px solid #ccc;
    background: linear-gradient(#f2f2f2, #e3e3e3);
    color: #333;
}

.crumb {
    padding: 1px 10px 0;
    line-height: 20px;
}

.crumb-end {
    width: 6px;
    height: 20px;
}

.crumb-bar button {
    gap: 4px;
    padding: 0 10px 0 8px;
    border-left: 1px solid #fff;
    background: linear-gradient(#f0f0ee, #d9dad5);
}

.crumb-bar button svg {
    width: 16px;
    height: 16px;
}

.results {
    width: 90%;
    margin: 29px auto 0;
    border: 1px solid #7b9ebd;
    border-collapse: separate;
    border-spacing: 0;
    line-height: 14px;
    white-space: nowrap;
}

.progress-table {
    margin-top: 14px;
    border-bottom: none;
    table-layout: auto;
}

.results th, .results td {
    padding: 2px 1px 0;
}

.caption th {
    height: 20px;
    background-color: #c3d7ff;
    font-family: "DejaVu Sans", Verdana, sans-serif;
    font-size: 14px;
}

.caption span {
    font-size: 12px;
}

.heads th {
    height: 20px;
    border: 1px solid #a5a596;
    border-left: none;
    background: linear-gradient(#f6f6f2, #d8d9d4);
}

.heads th:last-child {
    border-right: none;
}

.p-num { width: 11.6%; }
.p-uuid { width: 31.1%; }
.p-path { width: 28.2%; }
.p-date { width: 29.1%; }

.num { width: 14px; }
.uuid { width: 214px; }
.date { width: 110px; }

.results tbody tr:nth-child(odd) {
    background-color: #e0ecff;
}

.results tfoot td {
    background-color: #c3d7ff;
    font-weight: bold;
    text-align: center;
}

.status-bar {
    height: 30px;
    display: flex;
    align-items: center;
    padding-left: 4px;
}

.status-bar .sep {
    align-self: stretch;
    align-items: center;
}

.user {
    margin-left: 4px;
    padding: 0 3px;
    border: 1px solid #a5a596;
    background-color: #f00;
    color: #fff;
    font-weight: bold;
    line-height: 14px;
}

.quota {
    width: 80px;
    margin-left: 4px;
    display: flex;
    align-items: center;
    gap: 8px;
}

.counts {
    display: flex;
    gap: 5px;
    margin-left: 20px;
}

.counts span {
    display: flex;
    align-items: center;
    gap: 6px;
}

.counts .wide {
    gap: 8px;
    margin-right: 2px;
}

.status-gear {
    color: #777;
    fill: #ccc;
}

.message-box {
    width: 342px;
    height: 17px;
    border: 1px solid #a5a596;
    background-color: #fff;
}
```
